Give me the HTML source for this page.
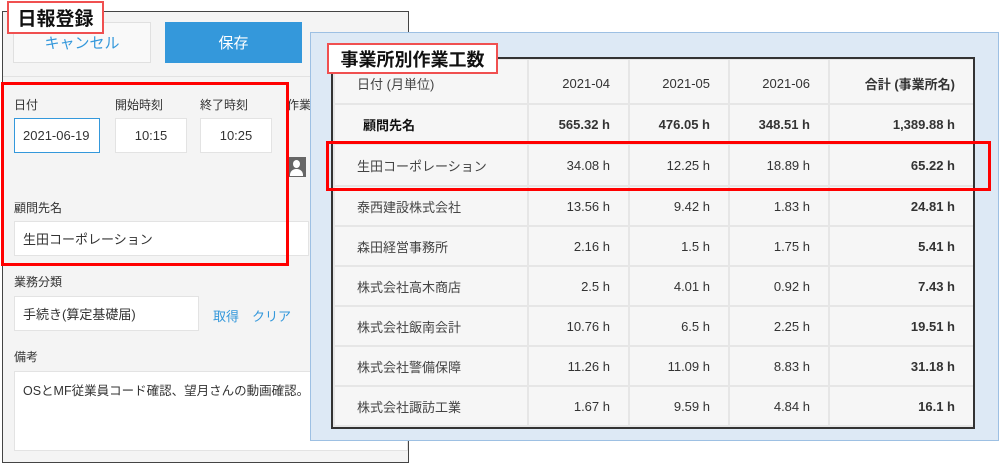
<!DOCTYPE html><html><head><meta charset="utf-8"><style>
*{margin:0;padding:0;box-sizing:border-box}
body{width:1000px;height:461px;background:#fff;position:relative;overflow:hidden;font-family:"Liberation Sans","Noto Sans CJK JP",sans-serif;color:#333;font-size:13px}
.a{position:absolute}
.inp{position:absolute;background:#fff;border:1px solid #e3e3e3;font-size:13px;color:#333;padding-left:8px;display:flex;align-items:center}
.lbl{position:absolute;font-size:12px;color:#333}
table{border-collapse:collapse;position:absolute;left:333px;top:58px;width:640px;table-layout:fixed}
td{background:#f6f6f6;border:2px solid #e6e6e6;height:40px;font-size:13px;text-align:right;padding:0 18px 0 0;color:#333;overflow:hidden;white-space:nowrap}
td:first-child{text-align:left;padding-left:22px;color:#444}
tr.h td{height:42px}
tr.t td{height:45px;padding-top:4px}
b{font-weight:bold}
</style></head><body>
<div class="a" style="left:2px;top:11px;width:407px;height:452px;border:1px solid #444;background:#f4f4f4"></div>
<div class="a" style="left:3px;top:76px;width:405px;height:1px;background:#e2e2e2"></div>
<div class="a" style="left:13px;top:22px;width:138px;height:41px;background:#f9f9f9;border:1px solid #e0e0e0;color:#3498db;font-size:15px;display:flex;align-items:center;justify-content:center">キャンセル</div>
<div class="a" style="left:165px;top:22px;width:137px;height:41px;background:#3498db;color:#fff;font-size:15px;display:flex;align-items:center;justify-content:center">保存</div>
<div class="lbl" style="left:14px;top:96px">日付</div>
<div class="lbl" style="left:115px;top:96px">開始時刻</div>
<div class="lbl" style="left:200px;top:96px">終了時刻</div>
<div class="lbl" style="left:287px;top:96px">作業</div>
<div class="inp" style="left:14px;top:118px;width:86px;height:35px;border-color:#3498db">2021-06-19</div>
<div class="inp" style="left:115px;top:118px;width:72px;height:35px;justify-content:center;padding:0">10:15</div>
<div class="inp" style="left:200px;top:118px;width:72px;height:35px;justify-content:center;padding:0">10:25</div>
<div class="a" style="left:287px;top:157px;width:19px;height:20px;background:#666;overflow:hidden"><div class="a" style="left:6px;top:3px;width:7px;height:8px;border-radius:50%;background:#fff"></div><div class="a" style="left:3px;top:12px;width:13px;height:7px;border-radius:6px 6px 0 0;background:#fff"></div></div>
<div class="lbl" style="left:14px;top:199px">顧問先名</div>
<div class="inp" style="left:14px;top:221px;width:295px;height:35px">生田コーポレーション</div>
<div class="a" style="left:1px;top:82px;width:288px;height:184px;border:3px solid #f00"></div>
<div class="lbl" style="left:14px;top:273px">業務分類</div>
<div class="inp" style="left:14px;top:296px;width:185px;height:35px">手続き(算定基礎届)</div>
<div class="lbl" style="left:213px;top:306px;color:#3498db;font-size:13px">取得</div>
<div class="lbl" style="left:252px;top:306px;color:#3498db;font-size:13px">クリア</div>
<div class="lbl" style="left:14px;top:348px">備考</div>
<div class="inp" style="left:14px;top:371px;width:394px;height:80px;align-items:flex-start;padding-top:8px;font-size:12.5px">OSとMF従業員コード確認、望月さんの動画確認。</div>
<div class="a" style="left:7px;top:1px;width:97px;height:33px;background:#fff;border:2px solid #f05050;font-size:19px;font-weight:bold;color:#111;display:flex;align-items:center;justify-content:center">日報登録</div>

<div class="a" style="left:310px;top:32px;width:689px;height:409px;background:#dde9f5;border:1px solid #9dc0e3"></div>
<div class="a" style="left:331px;top:57px;width:644px;height:372px;background:#f6f6f6"></div>
<table>
<colgroup><col style="width:194px"><col style="width:101px"><col style="width:100px"><col style="width:100px"><col style="width:145px"></colgroup>
<tr class="t"><td>日付 (月単位)</td><td>2021-04</td><td>2021-05</td><td>2021-06</td><td><b>合計 (事業所名)</b></td></tr>
<tr><td style="padding-left:28px"><b style="color:#111">顧問先名</b></td><td><b>565.32 h</b></td><td><b>476.05 h</b></td><td><b>348.51 h</b></td><td><b>1,389.88 h</b></td></tr>
<tr class="h"><td>生田コーポレーション</td><td>34.08 h</td><td>12.25 h</td><td>18.89 h</td><td><b>65.22 h</b></td></tr>
<tr><td>泰西建設株式会社</td><td>13.56 h</td><td>9.42 h</td><td>1.83 h</td><td><b>24.81 h</b></td></tr>
<tr><td>森田経営事務所</td><td>2.16 h</td><td>1.5 h</td><td>1.75 h</td><td><b>5.41 h</b></td></tr>
<tr><td>株式会社高木商店</td><td>2.5 h</td><td>4.01 h</td><td>0.92 h</td><td><b>7.43 h</b></td></tr>
<tr><td>株式会社飯南会計</td><td>10.76 h</td><td>6.5 h</td><td>2.25 h</td><td><b>19.51 h</b></td></tr>
<tr><td>株式会社警備保障</td><td>11.26 h</td><td>11.09 h</td><td>8.83 h</td><td><b>31.18 h</b></td></tr>
<tr><td>株式会社諏訪工業</td><td>1.67 h</td><td>9.59 h</td><td>4.84 h</td><td><b>16.1 h</b></td></tr>
</table>
<div class="a" style="left:331px;top:57px;width:644px;height:372px;border:2px solid #333"></div>
<div class="a" style="left:326px;top:141px;width:665px;height:50px;border:3px solid #f00"></div>
<div class="a" style="left:327px;top:43px;width:171px;height:31px;background:#fff;border:2px solid #f05050;font-size:18px;font-weight:bold;color:#111;display:flex;align-items:center;justify-content:center">事業所別作業工数</div>
</body></html>
